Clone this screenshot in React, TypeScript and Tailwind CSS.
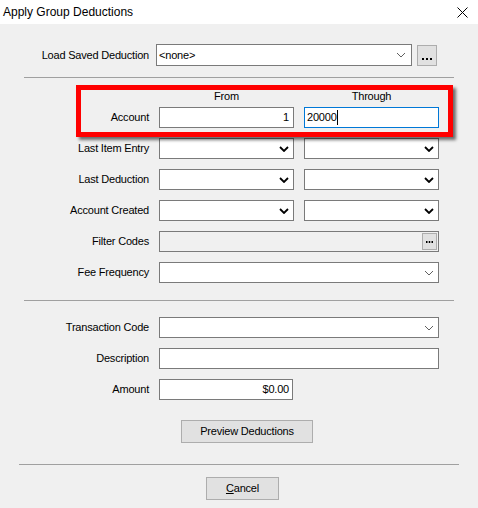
import React from 'react';

const font = { fontFamily: '"Liberation Sans", Arial, sans-serif' };

function ThinChevron() {
  return (
    <svg width="10" height="6" viewBox="0 0 10 6" className="shrink-0">
      <path d="M1 1 L5 5 L9 1" fill="none" stroke="#606060" strokeWidth="1" />
    </svg>
  );
}

function BoldChevron() {
  return (
    <svg width="10" height="6" viewBox="0 0 10 6" className="shrink-0">
      <path d="M1 1 L5 5 L9 1" fill="none" stroke="#000" strokeWidth="1.8" />
    </svg>
  );
}

function Dots({ size }: { size: number }) {
  return (
    <svg width={size * 3 + 4} height={size} viewBox={`0 0 ${size * 3 + 4} ${size}`}>
      <rect x="0" y="0" width={size} height={size} fill="#000" />
      <rect x={size + 2} y="0" width={size} height={size} fill="#000" />
      <rect x={size * 2 + 4} y="0" width={size} height={size} fill="#000" />
    </svg>
  );
}

function Label({ children }: { children: React.ReactNode }) {
  return <div className="w-[149px] shrink-0 text-right leading-none whitespace-nowrap">{children}</div>;
}

function Combo({ w, bold }: { w: string; bold?: boolean }) {
  return (
    <div className={`${w} h-[21px] bg-white border border-[#7a7a7a] flex items-center justify-end pr-[4px]`}>
      {bold ? <BoldChevron /> : <ThinChevron />}
    </div>
  );
}

function Row({ label, children }: { label: string; children: React.ReactNode }) {
  return (
    <div className="flex items-center h-[21px]">
      <Label>{label}</Label>
      <div className="ml-[10px] flex gap-[10px]">{children}</div>
    </div>
  );
}

export default function App() {
  return (
    <div className="w-[478px] h-[508px] bg-[#f0f0f0] text-[11px] tracking-[-0.2px] text-black overflow-hidden" style={font}>
      {/* Title bar */}
      <div className="h-[24px] bg-white flex items-center justify-between pl-[3px] pr-[10px] tracking-normal">
        <span className="text-[12px]">Apply Group Deductions</span>
        <svg width="11" height="11" viewBox="0 0 11 11">
          <path d="M0.5 0.5 L10.5 10.5 M10.5 0.5 L0.5 10.5" stroke="#000" strokeWidth="1" />
        </svg>
      </div>

      <div className="relative pt-[20px]">
        {/* Load saved */}
        <div className="flex items-center h-[22px]">
          <Label>Load Saved Deduction</Label>
          <div className="ml-[7px] w-[256px] h-[22px] bg-white border border-[#7a7a7a] flex items-center justify-between pl-[2px] pr-[5px]">
            <span>&lt;none&gt;</span>
            <ThinChevron />
          </div>
          <div className="ml-[5px] w-[20px] h-[21px] bg-[#e1e1e1] border border-[#adadad] flex items-end justify-center pb-[5px]">
            <Dots size={2} />
          </div>
        </div>

        <div className="mt-[11px] ml-[24px] w-[430px] h-px bg-[#a0a0a0]" />

        {/* From / Through headers */}
        <div className="mt-[10px] h-[16px] flex items-center">
          <div className="ml-[159px] w-[135px] text-center">From</div>
          <div className="ml-[10px] w-[135px] text-center">Through</div>
        </div>

        <div className="mt-[3px] flex flex-col gap-[10px]">
          <Row label="Account">
            <div className="w-[135px] h-[21px] bg-white border border-[#7a7a7a] flex items-center justify-end pr-[4px]">1</div>
            <div className="w-[135px] h-[21px] bg-white border border-[#0078d7] flex items-center pl-[2px]">
              <span>20000</span>
              <span className="w-px h-[15px] bg-black" />
            </div>
          </Row>
          <Row label="Last Item Entry">
            <Combo w="w-[135px]" bold />
            <Combo w="w-[135px]" bold />
          </Row>
          <Row label="Last Deduction">
            <Combo w="w-[135px]" bold />
            <Combo w="w-[135px]" bold />
          </Row>
          <Row label="Account Created">
            <Combo w="w-[135px]" bold />
            <Combo w="w-[135px]" bold />
          </Row>
          <Row label="Filter Codes">
            <div className="w-[280px] h-[21px] bg-[#f0f0f0] border border-[#7a7a7a] flex items-center justify-end pr-[1px]">
              <div className="w-[15px] h-[17px] bg-[#e1e1e1] border border-[#adadad] flex items-center justify-center">
                <svg width="7" height="2" viewBox="0 0 7 2">
                  <rect x="0" y="0" width="1.5" height="2" fill="#000" />
                  <rect x="2.75" y="0" width="1.5" height="2" fill="#000" />
                  <rect x="5.5" y="0" width="1.5" height="2" fill="#000" />
                </svg>
              </div>
            </div>
          </Row>
          <Row label="Fee Frequency">
            <Combo w="w-[280px]" />
          </Row>
        </div>

        <div className="mt-[17px] ml-[24px] w-[430px] h-px bg-[#a0a0a0]" />

        <div className="mt-[16px] flex flex-col gap-[10px]">
          <Row label="Transaction Code">
            <Combo w="w-[280px]" />
          </Row>
          <Row label="Description">
            <div className="w-[280px] h-[21px] bg-white border border-[#7a7a7a]" />
          </Row>
          <Row label="Amount">
            <div className="w-[134px] h-[21px] bg-white border border-[#7a7a7a] flex items-center justify-end pr-[3px]">$0.00</div>
          </Row>
        </div>

        <div className="mt-[20px] ml-[181px] w-[132px] h-[23px] bg-[#e1e1e1] border border-[#adadad] flex items-center justify-center">
          Preview Deductions
        </div>

        <div className="mt-[21px] ml-[19px] w-[440px] h-px bg-[#a0a0a0]" />

        <div className="mt-[12px] ml-[206px] w-[73px] h-[23px] bg-[#e1e1e1] border border-[#adadad] flex items-center justify-center">
          <span><span className="underline">C</span>ancel</span>
        </div>

        {/* Annotation highlight */}
        <div className="absolute left-[76px] top-[61px] w-[377px] h-[52px] border-[5px] border-[#ff0000] shadow-[3px_3px_3px_rgba(0,0,0,0.55)] pointer-events-none" />
      </div>
    </div>
  );
}
